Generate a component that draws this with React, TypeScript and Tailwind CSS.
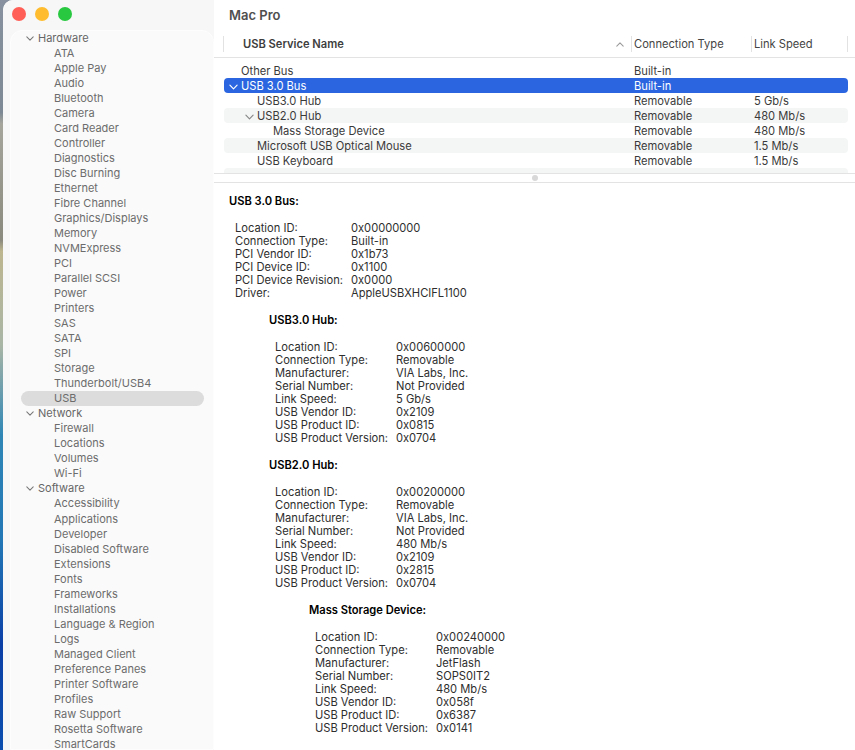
const hardware = ["ATA","Apple Pay","Audio","Bluetooth","Camera","Card Reader","Controller","Diagnostics","Disc Burning","Ethernet","Fibre Channel","Graphics/Displays","Memory","NVMExpress","PCI","Parallel SCSI","Power","Printers","SAS","SATA","SPI","Storage","Thunderbolt/USB4","USB"];
const network = ["Firewall","Locations","Volumes","Wi-Fi"];
const software = ["Accessibility","Applications","Developer","Disabled Software","Extensions","Fonts","Frameworks","Installations","Language & Region","Logs","Managed Client","Preference Panes","Printer Software","Profiles","Raw Support","Rosetta Software","SmartCards"];

function Chevron({ className }: { className: string }) {
  return (
    <svg viewBox="0 0 10 6" className={className} fill="none" stroke="currentColor" strokeWidth="1.3" strokeLinecap="round" strokeLinejoin="round">
      <path d="M1 1l4 4 4-4" />
    </svg>
  );
}

function Group({ title, items }: { title: string; items: string[] }) {
  return (
    <>
      <div className="h-[15.04px] flex items-center pl-[15px] text-[#666] leading-none">
        <Chevron className="w-[8px] h-[5px] text-[#777] mr-[4px]" />
        <span>{title}</span>
      </div>
      {items.map((i) => (
        <div key={i} className={"h-[15.04px] flex items-center pl-[33px] ml-[10px] mr-[9px] rounded-full leading-none text-[#6c6c6c] " + (i === "USB" ? "bg-[#dcdcdc]" : "")}>
          {i}
        </div>
      ))}
    </>
  );
}

const rows = [
  { name: "Other Bus", pad: "pl-[5px]", conn: "Built-in", speed: "", chev: false, sel: false, alt: false },
  { name: "USB 3.0 Bus", pad: "pl-[5px]", conn: "Built-in", speed: "", chev: true, sel: true, alt: false },
  { name: "USB3.0 Hub", pad: "pl-[21px]", conn: "Removable", speed: "5 Gb/s", chev: false, sel: false, alt: false },
  { name: "USB2.0 Hub", pad: "pl-[21px]", conn: "Removable", speed: "480 Mb/s", chev: true, sel: false, alt: true },
  { name: "Mass Storage Device", pad: "pl-[37px]", conn: "Removable", speed: "480 Mb/s", chev: false, sel: false, alt: false },
  { name: "Microsoft USB Optical Mouse", pad: "pl-[21px]", conn: "Removable", speed: "1.5 Mb/s", chev: false, sel: false, alt: true },
  { name: "USB Keyboard", pad: "pl-[21px]", conn: "Removable", speed: "1.5 Mb/s", chev: false, sel: false, alt: false },
];

function Info({ title, data, head, body, cols }: { title: string; data: [string, string][]; head: string; body: string; cols: string }) {
  return (
    <div className="mb-[14.1px]">
      <div className={"h-[13px] leading-[13px] font-semibold text-black " + head}>{title}</div>
      <div className={"grid mt-[14.1px] " + body + " " + cols}>
        {data.map(([k, v]) => (
          <div key={k} className="contents">
            <div className="h-[13px] leading-[13px] whitespace-nowrap">{k}</div>
            <div className="h-[13px] leading-[13px] whitespace-nowrap">{v}</div>
          </div>
        ))}
      </div>
    </div>
  );
}

export default function App() {
  return (
    <div className="w-[855px] h-[750px] overflow-hidden pl-[3px] bg-[linear-gradient(180deg,#87919f_0%,#7d8994_15%,#a5a59c_16.5%,#8b8a7e_32%,#bdb68f_33.5%,#a9b5a5_46%,#2f86b5_58%,#2277b5_72%,#0a3fa6_86%,#0c4fae_100%)] font-['Inter','Liberation_Sans',sans-serif] text-[11px]">
      <div className="flex h-full bg-white rounded-tl-[10px] overflow-hidden">
        <aside className="w-[211px] shrink-0 bg-[#f7f7f7] flex flex-col pl-[7px]">
          <div className="h-[29.5px] shrink-0 flex items-center gap-[9px] pl-[2px] pb-[1.5px]">
            <span className="w-[14px] h-[14px] rounded-full bg-[#ff5f57]" />
            <span className="w-[14px] h-[14px] rounded-full bg-[#febc2e]" />
            <span className="w-[14px] h-[14px] rounded-full bg-[#28c840]" />
          </div>
          <div className="flex-1 bg-[#fafafa] border border-[#fdfdfd] rounded-t-[12px] overflow-hidden">
            <Group title="Hardware" items={hardware} />
            <Group title="Network" items={network} />
            <Group title="Software" items={software} />
          </div>
        </aside>
        <main className="flex-1 min-w-0 flex flex-col bg-white text-[11.15px]">
          <div className="h-[30px] shrink-0 flex items-center pl-[15px] pt-[1px] text-[13px] font-semibold text-[#4f4f4f]">Mac Pro</div>
          <div className="h-[28px] shrink-0 border-b border-[#e3e3e3] flex items-start pt-[6px] pl-[9px] pr-[7px] text-[#444]">
            <div className="w-[408px] h-[16px] border-l border-[#e2e2e2] pl-[19px] pr-[7px] flex items-center justify-between font-semibold text-[#3d3d3d]">
              <span>USB Service Name</span>
              <Chevron className="w-[8px] h-[5px] rotate-180 text-[#999]" />
            </div>
            <div className="w-[120px] h-[16px] border-l border-[#e2e2e2] pl-[2px] flex items-center">Connection Type</div>
            <div className="w-[97px] h-[16px] border-l border-r border-[#e2e2e2] pl-[2px] flex items-center">Link Speed</div>
          </div>
          <div className="h-[115px] shrink-0 overflow-hidden pt-[5.3px] pl-[10px] pr-[7px] text-[#3a3a3a]">
            {rows.map((r) => (
              <div key={r.name} className={"h-[15px] pt-[1.5px] grid grid-cols-[410px_120px_1fr] items-center rounded-[4px] leading-none " + (r.sel ? "bg-[#2b66e0] text-white" : r.alt ? "bg-[#f4f5f5]" : "")}>
                <div className={"flex items-center whitespace-nowrap " + r.pad}>
                  <span className="w-[12px] shrink-0 flex items-center">
                    {r.chev && <Chevron className={"w-[9px] h-[6px] " + (r.sel ? "text-white" : "text-[#888]")} />}
                  </span>
                  {r.name}
                </div>
                <div>{r.conn}</div>
                <div>{r.speed}</div>
              </div>
            ))}
            <div className="h-[15px] rounded-[4px] bg-[#f4f5f5]" />
          </div>
          <div className="h-[10px] shrink-0 bg-white border-y border-[#e3e3e3] flex items-center justify-center">
            <span className="w-[6px] h-[6px] rounded-full bg-[#d8d8d8]" />
          </div>
          <div className="flex-1 overflow-hidden pt-[11.7px] text-[#2e2e2e] bg-white">
            <Info title="USB 3.0 Bus:" head="pl-[15px]" body="ml-[21px]" cols="grid-cols-[116px_1fr]" data={[["Location ID:","0x00000000"],["Connection Type:","Built-in"],["PCI Vendor ID:","0x1b73"],["PCI Device ID:","0x1100"],["PCI Device Revision:","0x0000"],["Driver:","AppleUSBXHCIFL1100"]]} />
            <Info title="USB3.0 Hub:" head="pl-[55px]" body="ml-[61px]" cols="grid-cols-[121px_1fr]" data={[["Location ID:","0x00600000"],["Connection Type:","Removable"],["Manufacturer:","VIA Labs, Inc."],["Serial Number:","Not Provided"],["Link Speed:","5 Gb/s"],["USB Vendor ID:","0x2109"],["USB Product ID:","0x0815"],["USB Product Version:","0x0704"]]} />
            <Info title="USB2.0 Hub:" head="pl-[55px]" body="ml-[61px]" cols="grid-cols-[121px_1fr]" data={[["Location ID:","0x00200000"],["Connection Type:","Removable"],["Manufacturer:","VIA Labs, Inc."],["Serial Number:","Not Provided"],["Link Speed:","480 Mb/s"],["USB Vendor ID:","0x2109"],["USB Product ID:","0x2815"],["USB Product Version:","0x0704"]]} />
            <Info title="Mass Storage Device:" head="pl-[95px]" body="ml-[101px]" cols="grid-cols-[121px_1fr]" data={[["Location ID:","0x00240000"],["Connection Type:","Removable"],["Manufacturer:","JetFlash"],["Serial Number:","SOPS0IT2"],["Link Speed:","480 Mb/s"],["USB Vendor ID:","0x058f"],["USB Product ID:","0x6387"],["USB Product Version:","0x0141"]]} />
          </div>
        </main>
      </div>
    </div>
  );
}
